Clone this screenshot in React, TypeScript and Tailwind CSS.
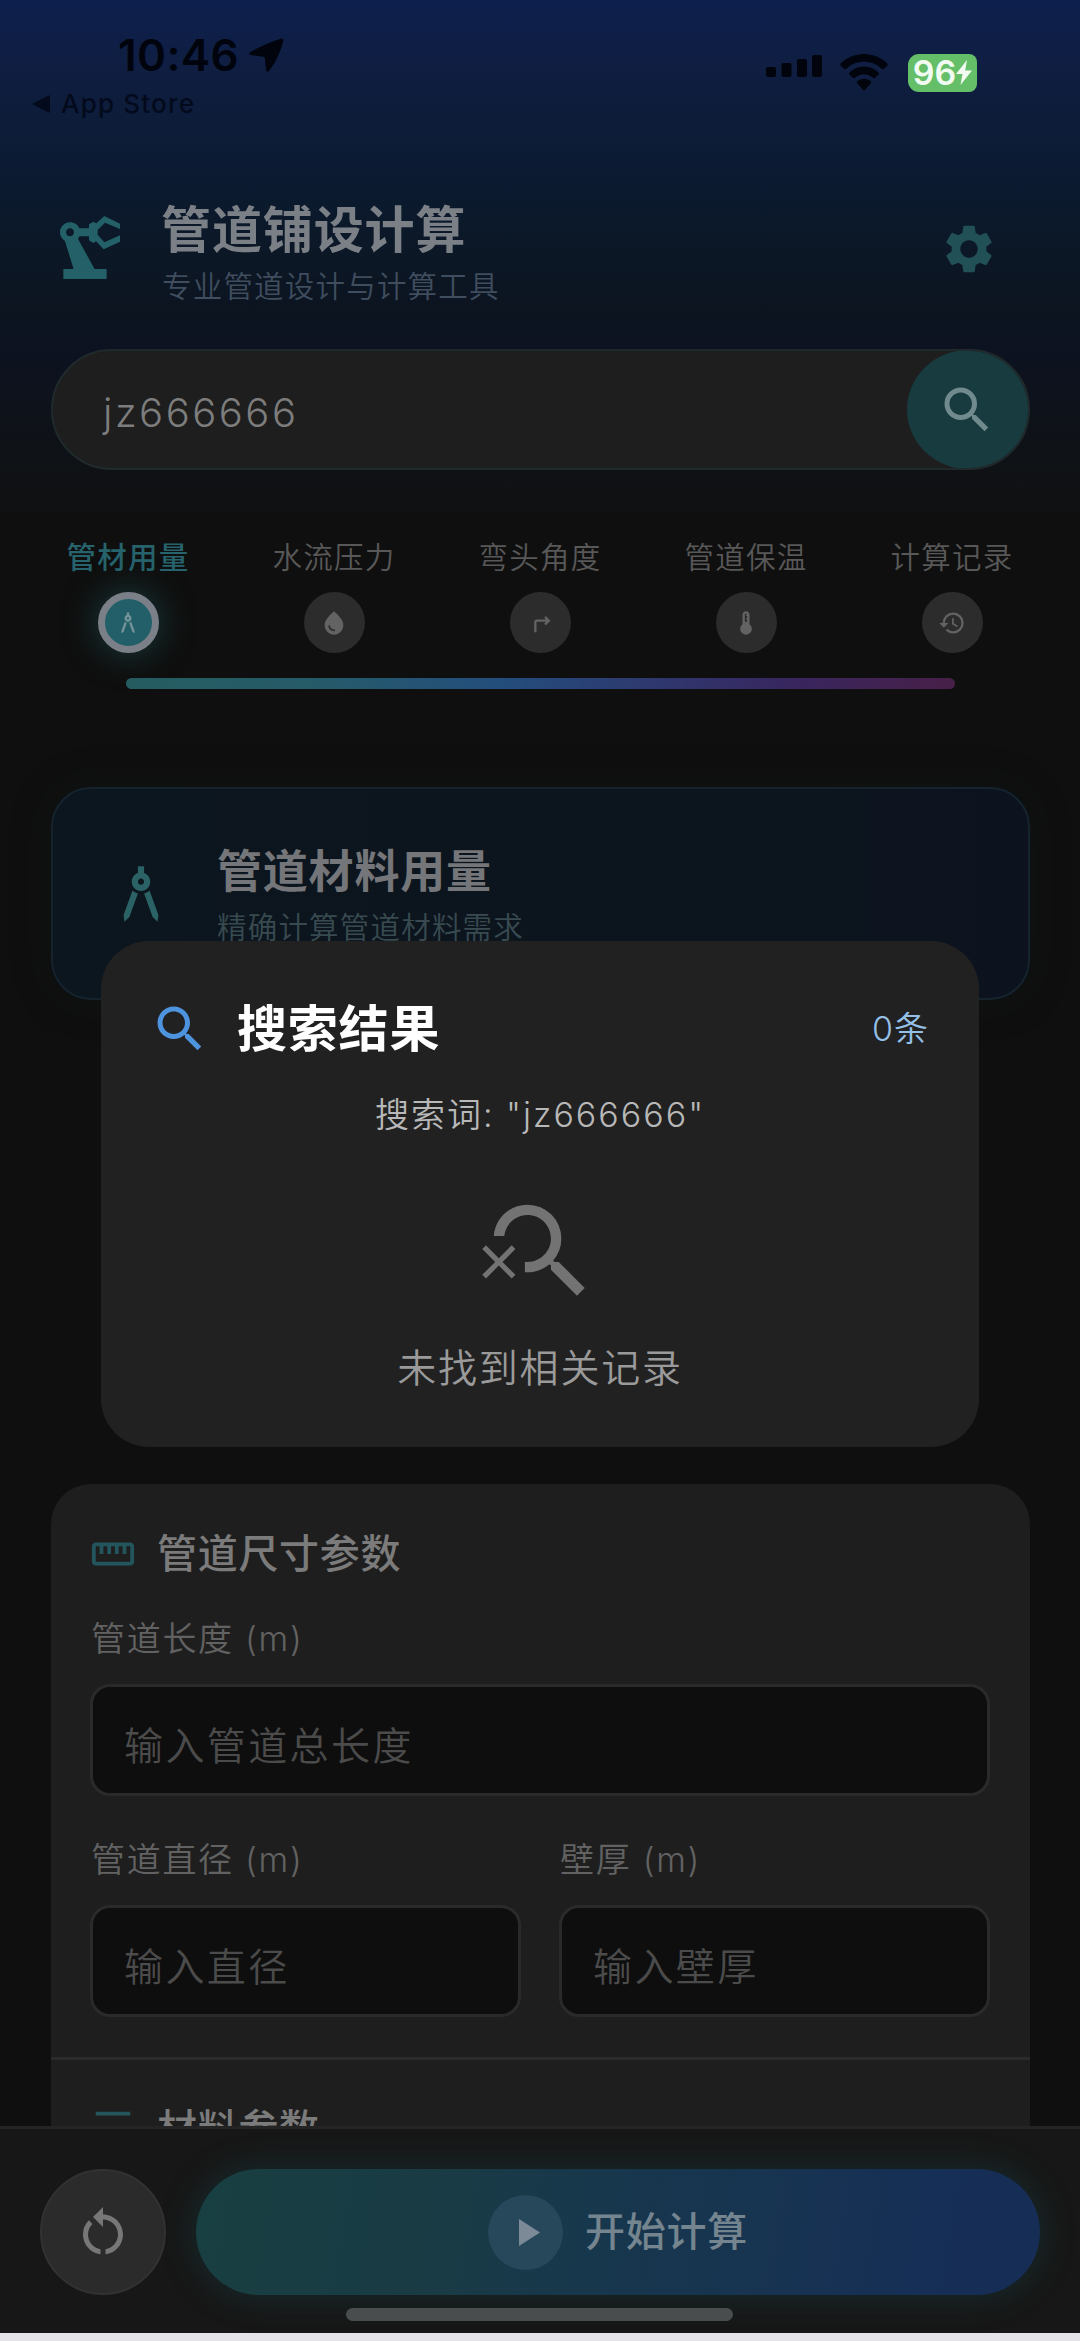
import React from 'react';
import {
  MdArchitecture,
  MdDensityMedium,
  MdDeviceThermostat,
  MdHistory,
  MdRestartAlt,
  MdSearch,
  MdSearchOff,
  MdSettings,
  MdStraighten,
  MdTurnRight,
  MdWaterDrop,
} from 'react-icons/md';

function StatusBar() {
  return (
    <div className="flex h-[130px] shrink-0 justify-between font-['Inter'] text-[#01040d]">
      <div className="pt-[28px] pl-[32px]">
        <div className="flex h-[54px] items-center gap-[10px] pl-[86px]">
          <span className="text-[44px] leading-[54px] font-semibold tracking-[0.400px]">10:46</span>
          <svg width="35" height="35" viewBox="0 0 36 36" fill="currentColor">
            <path d="M32.500 .8 C34.500 .1 35.700 1.300 35 3.500 C33 12 28.500 23.500 20.800 33.500 C19.400 35.500 17.700 35 17.600 33 L16.300 20.800 Q16.200 19.600 15 19.300 L2 17.600 C-.2 17 0 15.200 1.600 14.200 C11 9 22.500 3.800 32.500 .8 Z" />
          </svg>
        </div>
        <div className="flex h-[44px] items-center gap-[11px] text-[#030a1c]">
          <svg width="18" height="18" viewBox="0 0 18 18" fill="currentColor">
            <path d="M0 9 L16 .8 Q18 0 18 2 V16 Q18 18 16 17.2 Z" />
          </svg>
          <span className="text-[26px] leading-[44px] font-medium tracking-[1.200px]">App Store</span>
        </div>
      </div>
      <div className="mt-[54px] mr-[103px] flex h-[37px] items-center">
        <svg className="mt-[-14px]" width="56" height="22" viewBox="0 0 56 22" fill="currentColor">
          <rect x="0" y="12" width="10" height="10" rx="2" />
          <rect x="15.5" y="8" width="10" height="14" rx="2" />
          <rect x="31" y="4" width="10" height="18" rx="2" />
          <rect x="46" y="0" width="10" height="22" rx="2" />
        </svg>
        <svg className="ml-[18px]" width="48" height="37" viewBox="0 0 48 37" fill="currentColor">
          <path d="M24 0 C33 0 41.5 3.6 47.3 9.4 Q48.4 10.6 47.3 11.8 L44 14.8 Q42.8 15.8 41.7 14.8 C37 10.3 31 7.8 24 7.8 S11 10.3 6.3 14.8 Q5.2 15.8 4 14.8 L.7 11.8 Q-.4 10.6 .7 9.4 C6.5 3.6 15 0 24 0Z" />
          <path d="M24 12.6 C29.600 12.600 34.700 14.800 38.500 18.400 Q39.600 19.600 38.500 20.700 L35.200 23.700 Q34 24.700 32.900 23.700 C30.500 21.500 27.400 20.200 24 20.200 S17.500 21.500 15.100 23.700 Q14 24.700 12.800 23.700 L9.500 20.700 Q8.400 19.600 9.500 18.400 C13.300 14.800 18.400 12.600 24 12.600Z" />
          <path d="M24 24.800 C26.600 24.800 28.900 25.700 30.700 27.300 Q31.600 28.400 30.700 29.400 L25 35.700 Q24 36.700 23 35.700 L17.300 29.400 Q16.400 28.400 17.300 27.300 C19.100 25.700 21.400 24.800 24 24.800Z" />
        </svg>
        <div className="ml-[20px] flex h-[38px] w-[69px] items-center justify-center rounded-[11px] rounded-r-[8px] bg-[#65bf68] text-[#f2fbf2]">
          <span className="text-[34px] leading-[38px] font-semibold">96</span>
          <svg width="16" height="25" viewBox="0 0 16 25" fill="currentColor">
            <path d="M11 0 L0 14 H6.500 L4.500 25 L16 10.500 H9.200 Z" />
          </svg>
        </div>
      </div>
    </div>
  );
}

function RobotArm() {
  return (
    <svg className="text-[#246068]" width="80" height="80" viewBox="0 0 24 24" fill="currentColor">
      <path d="M21 7.900 16.300 10 14.300 7.700V6.300l2.200-2.200L21 6V4.400L16.300 2.100 13.900 4.300 13 3.800 11.700 4.600V5.800H8.820C8.400 4.640 7.300 4 6 4 4.340 4 3 5.340 3 7c0 1.100.6 2.050 1.480 2.580L7.080 18H4v3h13v-3h-3.620L8.410 8.970c.17-.24.320-.490.410-.770H11.700v1.200l1.300.8.8-.5 2.300 2.400 4.900-2.300V7.900zM6 8.200c-.7 0-1.200-.5-1.200-1.200S5.300 5.800 6 5.800 7.200 6.300 7.200 7 6.700 8.200 6 8.200z" />
    </svg>
  );
}

function Header() {
  return (
    <div className="flex h-[219px] shrink-0 items-start justify-between pr-[82px] pl-[50px]">
      <div className="flex">
        <div className="pt-[79px]">
          <RobotArm />
        </div>
        <div className="pl-[31px]">
          <h1 className="mt-[67px] h-[66px] text-[50px] leading-[66px] font-semibold tracking-[0.900px] text-[#7b8086]">
            管道铺设计算
          </h1>
          <p className="mt-[3px] h-[40px] pl-px text-[29.500px] leading-[40px] font-[350] tracking-[1.200px] text-[#3f4d5e]">
            专业管道设计与计算工具
          </p>
        </div>
      </div>
      <MdSettings className="mt-[90px] text-[#215157]" size={58} />
    </div>
  );
}

function SearchBar() {
  return (
    <div className="mr-[50px] ml-[51px] flex h-[121px] shrink-0 items-center justify-between overflow-hidden rounded-full border-2 border-[#202a2d] bg-[#1e1e1e] pl-[50px]">
      <span className="pt-[6px] font-['Inter'] text-[40px] leading-[50px] font-[350] tracking-[2.500px] text-[#7d7d7d]">
        jz666666
      </span>
      <div className="-mr-px flex h-[119px] w-[122px] items-center justify-center rounded-[50%] bg-[#183b3f] pr-[3px]">
        <MdSearch className="text-[#718a8d]" size={60} />
      </div>
    </div>
  );
}

const tabs = [
  { label: '管材用量', Icon: MdArchitecture },
  { label: '水流压力', Icon: MdWaterDrop },
  { label: '弯头角度', Icon: MdTurnRight },
  { label: '管道保温', Icon: MdDeviceThermostat },
  { label: '计算记录', Icon: MdHistory },
];

function Tabs() {
  return (
    <div className="shrink-0">
      <div className="grid grid-cols-5 px-[25px] pt-[67px]">
        {tabs.map(({ label, Icon }, i) => (
          <div key={label} className="flex flex-col items-center">
            <span
              className={
                i === 0
                  ? 'h-[40px] text-[29.500px] leading-[40px] font-medium tracking-[1.300px] text-[#26636c]'
                  : 'h-[40px] text-[29.500px] leading-[40px] font-[350] tracking-[1.300px] text-[#585858]'
              }
            >
              {label}
            </span>
            <div
              className={
                i === 0
                  ? 'mt-[15px] flex size-[61px] items-center justify-center rounded-full border-[7.500px] border-[#7b8088] bg-[#225f69] text-[#76949a] shadow-[0_0_30px_5px_rgba(29,80,84,0.5)]'
                  : 'mt-[15px] flex size-[61px] items-center justify-center rounded-full bg-[#2c2c2c] text-[#636363]'
              }
            >
              <Icon size={28} />
            </div>
          </div>
        ))}
      </div>
      <div className="mt-[25px] mr-[125px] ml-[126px] h-[11px] rounded-full bg-[linear-gradient(90deg,#265d61_0%,#265b68_22%,#234e7c_45%,#2d3a70_62%,#38265f_80%,#482048_100%)]" />
    </div>
  );
}

function HeroCard() {
  return (
    <div className="mr-[50px] ml-[51px] mt-[98px] flex h-[213px] shrink-0 rounded-[40px] border-2 border-[#14232d] bg-linear-to-r from-[#0c161e] to-[#0c131e] pl-[51px] shadow-[0_0_40px_rgba(20,28,30,0.25)]">
      <MdArchitecture className="mt-[68px] text-[#2a6266]" size={74} />
      <div className="pl-[39px]">
        <h2 className="mt-[53px] h-[60px] text-[45px] leading-[60px] font-semibold tracking-[0.800px] text-[#747679]">
          管道材料用量
        </h2>
        <p className="mt-[5px] h-[40px] text-[29.500px] leading-[40px] font-[350] tracking-[1.200px] text-[#384a50]">
          精确计算管道材料需求
        </p>
      </div>
    </div>
  );
}

function Field({ label, placeholder }: { label: string; placeholder: string }) {
  return (
    <div className="flex-1">
      <div className="h-[46px] pl-px text-[34px] leading-[46px] font-[350] tracking-[1.700px] text-[#626262]">{label}</div>
      <div className="mt-[22px] flex h-[112px] items-center rounded-[20px] border-[3px] border-[#2a2a2a] bg-[#0e0e0e] pt-[12px] pl-[31px] text-[39px] leading-[50px] font-[350] tracking-[2.400px] text-[#4b4b4b]">
        {placeholder}
      </div>
    </div>
  );
}

function FormCard() {
  return (
    <div className="mr-[50px] ml-[51px] mt-[484px] h-[642px] shrink-0 overflow-hidden rounded-t-[40px] bg-[#1e1e1e] pt-[40px]">
      <div className="pr-[40px] pl-[39px]">
        <div className="flex h-[60px] items-center gap-[21px]">
          <MdStraighten className="text-[#23565c]" size={46} />
          <h3 className="text-[40px] leading-[60px] font-medium tracking-[0.700px] text-[#7b7b7b]">管道尺寸参数</h3>
        </div>
        <div className="mt-[32px]">
          <Field label="管道长度 (m)" placeholder="输入管道总长度" />
        </div>
        <div className="mt-[41px] flex gap-[38px]">
          <Field label="管道直径 (m)" placeholder="输入直径" />
          <Field label="壁厚 (m)" placeholder="输入壁厚" />
        </div>
      </div>
      <div className="mt-[40px] h-[3px] bg-[#2b2b2b]" />
      <div className="flex items-center gap-[21px] pt-[39px] pr-[40px] pl-[39px]">
        <MdDensityMedium className="text-[#23565c]" size={46} />
        <h3 className="text-[40px] leading-[60px] font-medium tracking-[0.700px] text-[#7b7b7b]">材料参数</h3>
      </div>
    </div>
  );
}

function BottomBar() {
  return (
    <div className="flex h-[207px] shrink-0 flex-col border-t-[3px] border-[#242424] bg-[#171717]">
      <div className="flex pt-[40px] pr-[40px] pl-[40px]">
        <div className="flex size-[126px] items-center justify-center rounded-full border-2 border-[#323232] bg-[#2b2b2b]">
          <MdRestartAlt className="text-[#777777]" size={60} />
        </div>
        <div className="ml-[30px] flex h-[126px] flex-1 items-center justify-center gap-[22px] rounded-full bg-[linear-gradient(100deg,#183f41_0%,#193b45_30%,#17374d_48%,#173450_65%,#162f56_85%,#162d56_100%)] shadow-[0_0_30px_4px_rgba(24,62,66,0.45)]">
          <div className="flex size-[75px] items-center justify-center rounded-full bg-[#27475a]">
            <svg width="21" height="27" viewBox="0 0 21 27" fill="#7c8a98" className="ml-[7px]">
              <path d="M0 0 L21 13.500 L0 27Z" />
            </svg>
          </div>
          <span className="text-[40px] leading-[60px] font-medium tracking-[0.700px] text-[#75858f]">开始计算</span>
        </div>
      </div>
      <div className="mt-[13px] ml-[346px] h-[13px] w-[387px] rounded-full bg-[#4a4d4e]" />
    </div>
  );
}

function ResultDialog() {
  return (
    <div className="absolute top-[941px] left-[101px] flex h-[506px] w-[878px] flex-col items-center rounded-[48px] bg-[#212121]">
      <div className="mt-[55px] flex h-[66px] w-full items-center pr-[50px] pl-[49px]">
        <MdSearch className="text-[#4d93de]" size={60} />
        <h2 className="ml-[27px] text-[50px] leading-[66px] font-semibold tracking-[0.800px] text-white">搜索结果</h2>
        <span className="ml-auto text-[34px] leading-[46px] font-[350] tracking-[1px] text-[#94bfe6]">0条</span>
      </div>
      <p className="mt-[28px] text-[34px] leading-[50px] font-[350] tracking-[2px] text-[#b8b8b8]">搜索词: "jz666666"</p>
      <MdSearchOff className="mt-[49px] text-[#737373]" size={125} />
      <p className="mt-[25px] text-[39px] leading-[58px] font-[350] tracking-[1.800px] text-[#9a9a9a]">未找到相关记录</p>
    </div>
  );
}

export default function App() {
  return (
    <div className="relative flex h-[2341px] w-[1080px] flex-col overflow-hidden bg-[#0f0f0f] font-['Inter','Noto_Sans_CJK_SC',sans-serif]">
      <div className="flex h-[513px] shrink-0 flex-col bg-[linear-gradient(180deg,#0d1f4e_0%,#0f1e42_12%,#0d1c38_25%,#0b1a30_36%,#0c1827_48%,#0c1420_60%,#0d1220_70%,#0e1218_84%,#101112_100%)]">
        <StatusBar />
        <Header />
        <SearchBar />
      </div>
      <div className="-mt-[43px] flex flex-col">
        <Tabs />
        <HeroCard />
        <FormCard />
        <BottomBar />
      </div>
      <div className="h-[8px] shrink-0 bg-[#e4e3e8]" />
      <ResultDialog />
    </div>
  );
}
